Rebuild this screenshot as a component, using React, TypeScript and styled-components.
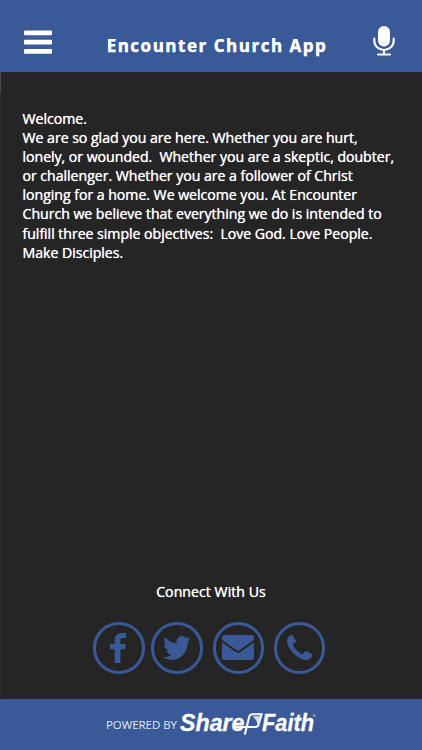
import React from "react";
import styled, { createGlobalStyle } from "styled-components";

const BLUE = "#3a5998";
const DARK = "#252525";

const GlobalStyle = createGlobalStyle`
  * { box-sizing: border-box; }
  body { margin: 0; background: ${DARK}; }
`;

const Screen = styled.div`
  width: 422px;
  height: 750px;
  display: flex;
  flex-direction: column;
  overflow: hidden;
  background: ${DARK};
  color: #fff;
  font-family: "Open Sans", "Noto Sans", sans-serif;
`;

const Header = styled.header`
  height: 72px;
  flex: none;
  display: flex;
  justify-content: space-between;
  padding: 0 27px 0 24px;
  background: ${BLUE};
`;

const HeaderButton = styled.button<{ $top: number }>`
  display: flex;
  align-items: flex-start;
  padding: ${(p) => p.$top}px 0 0;
  border: 0;
  background: none;
  color: #fff;
`;

const Title = styled.h1`
  margin: 34px 0 0 9px;
  font-size: 17px;
  line-height: 24px;
  font-weight: 700;
  letter-spacing: 1.52px;
  text-shadow: 0 0 0.6px #fff;
  -webkit-text-stroke: 0.25px #fff;
  white-space: nowrap;
`;

const Main = styled.main`
  flex: 1;
  display: flex;
  flex-direction: column;
  padding: 37px 0 0 22.5px;
  background: linear-gradient(#4a4a4c, #4a4a4c) 0 0 / 1px 20px no-repeat,
    linear-gradient(#303030, #303030) 0 0 / 1px 100% no-repeat;
`;

const Welcome = styled.p`
  margin: 0;
  display: flex;
  flex-direction: column;
`;

const Line = styled.span`
  font-size: 14.2px;
  line-height: 19.1px;
  letter-spacing: -0.06px;
  text-shadow: 0 0 0.7px #fff;
  white-space: pre;
`;

const Connect = styled.section`
  margin-top: auto;
  margin-left: -22.5px;
  height: 117px;
`;

const ConnectTitle = styled.h2`
  margin: 0;
  text-align: center;
  font-size: 14.2px;
  line-height: 20px;
  font-weight: 400;
  text-shadow: 0 0 0.7px #fff;
`;

const Links = styled.div`
  display: flex;
  padding: 20px 0 0 93px;
`;

const RoundLink = styled.a<{ $gap?: number }>`
  width: 51.5px;
  height: 51.5px;
  margin-right: ${(p) => p.$gap ?? 0}px;
  flex: none;
  display: flex;
  align-items: center;
  justify-content: center;
  border: 3px solid ${BLUE};
  border-radius: 50%;
  color: ${BLUE};
`;

const Footer = styled.footer`
  height: 51px;
  flex: none;
  display: flex;
  padding-left: 106px;
  background: ${BLUE};
`;

const Powered = styled.span`
  width: 74px;
  flex: none;
  padding-top: 17px;
  font-size: 11.4px;
  line-height: 18px;
  color: #e4e9f6;
  white-space: nowrap;
`;

const LINES = [
  "Welcome.",
  "We are so glad you are here. Whether you are hurt,",
  "lonely, or wounded.  Whether you are a skeptic, doubter,",
  "or challenger. Whether you are a follower of Christ",
  "longing for a home. We welcome you. At Encounter",
  "Church we believe that everything we do is intended to",
  "fulfill three simple objectives:  Love God. Love People.",
  "Make Disciples.",
];

const MenuIcon = () => (
  <svg width="28" height="24" viewBox="0 0 28 24" fill="currentColor">
    <rect y="0.5" width="28" height="4.8" rx="1" />
    <rect y="9.7" width="28" height="4.8" rx="1" />
    <rect y="19" width="28" height="4.8" rx="1" />
  </svg>
);

const MicIcon = () => (
  <svg width="22" height="31" viewBox="0 0 22 31">
    <rect x="5" y="0" width="12" height="20.5" rx="6" fill="currentColor" />
    <path
      d="M1.3 12.500V14.800a9.700 9.200 0 0 0 19.400 0V12.500M11 24v4.500M5 28.500h12"
      fill="none"
      stroke="currentColor"
      strokeWidth="2.1"
      strokeLinecap="round"
    />
  </svg>
);

const FacebookIcon = () => (
  <svg width="17" height="30" viewBox="530 0 918 1664" preserveAspectRatio="none" fill="currentColor">
    <path d="M1343 12v264h-157q-86 0-116 36t-30 108v189h293l-39 296h-254v759h-306v-759h-255v-296h255v-218q0-186 104-288.5t277-102.5q147 0 228 12z" transform="translate(51 0)" />
  </svg>
);

const TwitterIcon = () => (
  <svg width="27.5" height="24" viewBox="108 256 1576 1280" preserveAspectRatio="none" fill="currentColor">
    <path d="M1684 408q-67 98-162 167 1 14 1 42 0 130-38 259.5t-115.5 248.5-184.5 210.5-258 146-323 54.5q-271 0-496-145 35 4 78 4 225 0 401-138-105-2-188-64.5t-114-159.5q33 5 61 5 43 0 85-11-112-23-185.5-111.5t-73.5-205.5v-4q68 38 146 41-66-44-105-115t-39-154q0-88 44-163 121 149 294.5 238.5t371.5 99.5q-8-38-8-74 0-134 94.5-228.5t228.5-94.5q140 0 236 102 109-21 205-78-37 115-142 178 93-10 186-50z" />
  </svg>
);

const MailIcon = () => (
  <svg width="32" height="25" viewBox="0 0 32 25" fill="currentColor">
    <path d="M2.5 0h27Q32 0 32 2.5v1.2q0 1.2-1.1 2L17.6 14.9q-1.6 1.1-3.2 0L1.1 5.7Q0 4.9 0 3.700V2.500Q0 0 2.500 0z" />
    <path d="M0 7.300L13.200 16.700q2.800 2 5.600 0L32 7.300V22.500Q32 25 29.500 25h-27Q0 25 0 22.500z" />
  </svg>
);

const PhoneIcon = () => (
  <svg width="25" height="25" viewBox="192 128 1408 1408" fill="currentColor">
    <path d="M1600 1240q0 27-10 70.5t-21 68.5q-21 50-122 106-94 51-186 51-27 0-52.5-3.5t-57.5-12.5-47.5-14.5-55.5-20.5-49-18q-98-35-175-83-128-79-264.5-215.5t-215.5-264.5q-48-77-83-175-3-9-18-49t-20.5-55.5-14.5-47.5-12.5-57.5-3.5-52.5q0-92 51-186 56-101 106-122 25-11 68.5-21t70.5-10q14 0 21 3 18 6 53 76 11 19 30 54t35 63.5 31 53.5q3 4 17.5 25t21.5 35.5 7 28.5q0 20-28.5 50t-62 55-62 53-28.5 46q0 9 5 22.5t8.5 20.5 14 24 11.5 19q76 137 174 235t235 174q2 1 19 11.5t24 14 20.5 8.5 22.5 5q18 0 46-28.5t53-62 55-62 50-28.5q14 0 28.5 7t35.5 21.5 25 17.5q25 15 53.5 31t63.5 35 54 30q70 35 76 53 3 7 3 21z" />
  </svg>
);

const ShareFaithLogo = () => (
  <svg width="140" height="40" viewBox="0 0 140 40" fill="#fff">
    <g
      fontFamily='"Liberation Sans", Arial, sans-serif'
      fontWeight="700"
      fontStyle="italic"
      stroke="#fff"
      strokeWidth="0.3"
    >
      <text x="0" y="32" fontSize="24.5" textLength="64.5" lengthAdjust="spacingAndGlyphs">Share</text>
      <text x="82" y="32" fontSize="24.5" textLength="52" lengthAdjust="spacingAndGlyphs">Faith</text>
    </g>
    <circle cx="134.5" cy="16.5" r="0.9" fill="none" stroke="#fff" strokeWidth="0.5" />
    <path
      d="M54 28H75.500Q77.800 28 78.500 25.800L81.500 15.300H72.500Q70 15.300 69.300 17.500L64.800 35.500"
      fill="none"
      stroke="#fff"
      strokeWidth="2.1"
    />
    <path d="M72.500 17.200H80.500L77.700 25.500Q76.500 20.500 72.500 17.200z" fill="#d5dff2" />
  </svg>
);

export default function App() {
  return (
    <>
      <GlobalStyle />
      <Screen>
        <Header>
          <HeaderButton $top={30} aria-label="Menu"><MenuIcon /></HeaderButton>
          <Title>Encounter Church App</Title>
          <HeaderButton $top={26} aria-label="Voice"><MicIcon /></HeaderButton>
        </Header>
        <Main>
          <Welcome>
            {LINES.map((line) => (
              <Line key={line}>{line}</Line>
            ))}
          </Welcome>
          <Connect>
            <ConnectTitle>Connect With Us</ConnectTitle>
            <Links>
              <RoundLink $gap={6.5} aria-label="Facebook"><FacebookIcon /></RoundLink>
              <RoundLink $gap={10.2} aria-label="Twitter"><TwitterIcon /></RoundLink>
              <RoundLink $gap={9.8} aria-label="Email"><MailIcon /></RoundLink>
              <RoundLink aria-label="Phone"><PhoneIcon /></RoundLink>
            </Links>
          </Connect>
        </Main>
        <Footer>
          <Powered>POWERED BY</Powered>
          <ShareFaithLogo />
        </Footer>
      </Screen>
    </>
  );
}
